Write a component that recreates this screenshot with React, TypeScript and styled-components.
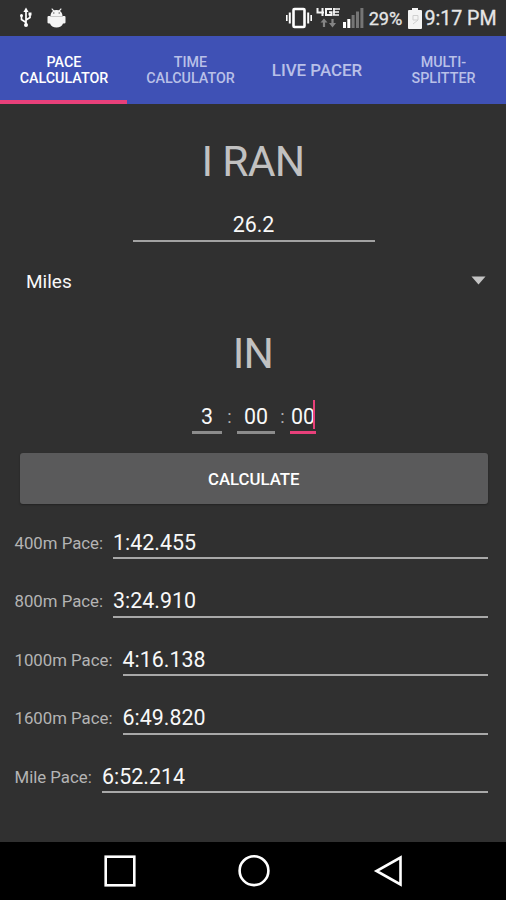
import React from "react";
import styled, { createGlobalStyle } from "styled-components";

const GlobalStyle = createGlobalStyle`
  * { box-sizing: border-box; }
  body { margin: 0; background: #303030; font-family: Roboto, "Liberation Sans", sans-serif; }
`;

const Screen = styled.div`
  width: 506px;
  height: 900px;
  display: flex;
  flex-direction: column;
  overflow: hidden;
  background: #303030;
  color: #f8f8f8;
`;

const StatusBar = styled.header`
  height: 36px;
  flex: none;
  display: flex;
  align-items: center;
  justify-content: space-between;
  padding: 0 9.5px 0 18px;
`;

const StatusGroup = styled.div`
  display: flex;
  align-items: center;
  height: 36px;
`;

const StatusText = styled.span<{ $size: number; $left: number }>`
  font-size: ${(p) => p.$size}px;
  line-height: 36px;
  margin-left: ${(p) => p.$left}px;
  padding-top: 2px;
  color: #e6e6e6;
  -webkit-text-stroke: 0.3px #e6e6e6;
  white-space: nowrap;
`;

const Tabs = styled.nav`
  height: 67.5px;
  flex: none;
  display: grid;
  grid-template-columns: 127px 126px 127px 126px;
  background: #3f51b5;
`;

const Tab = styled.div<{ $active?: boolean; $large?: boolean }>`
  display: flex;
  align-items: center;
  justify-content: center;
  text-align: center;
  white-space: pre-line;
  padding-top: ${(p) => (p.$large ? 4 : 5)}px;
  padding-left: 1px;
  border-bottom: 4px solid ${(p) => (p.$active ? "#e8407a" : "transparent")};
  color: ${(p) => (p.$active ? "#fff" : "#b9c0e8")};
  font-weight: 500;
  font-size: ${(p) => (p.$large ? 16.9 : 14.3)}px;
  line-height: 16px;
`;

const Heading = styled.h1<{ $height: number; $drop: number }>`
  margin: 0;
  height: ${(p) => p.$height}px;
  padding-top: ${(p) => p.$drop}px;
  line-height: ${(p) => p.$height - p.$drop}px;
  font-weight: 400;
  font-size: 42.6px;
  letter-spacing: -0.7px;
  text-align: center;
  color: #c1c1c1;
`;

const DistanceField = styled.div`
  width: 242px;
  height: 37px;
  margin: 0 0 0 132.5px;
  border-bottom: 2px solid #a2a2a2;
  text-align: center;
  font-size: 21.4px;
  line-height: 40px;
`;

const UnitSelect = styled.div`
  height: 80px;
  display: flex;
  align-items: center;
  justify-content: space-between;
  padding: 0 20px 2px 26px;
  font-size: 19px;

  svg {
    margin-bottom: 1px;
  }
`;

const TimeRow = styled.div`
  height: 60px;
  display: flex;
  padding-left: 192px;
`;

const TimeField = styled.div<{ $width: number; $focused?: boolean }>`
  position: relative;
  width: ${(p) => p.$width}px;
  height: 60px;
  border-bottom: 3px solid ${(p) => (p.$focused ? "#e8407a" : "#8c8c8c")};
  text-align: center;
  font-size: 21.4px;
  line-height: 86px;
`;

const Caret = styled.i`
  position: absolute;
  right: 1px;
  top: 26px;
  width: 2.5px;
  height: 29px;
  background: #e8407a;
`;

const Colon = styled.span`
  width: 15px;
  text-align: center;
  font-size: 18px;
  line-height: 86px;
  color: #b0b0b0;
`;

const CalculateButton = styled.button`
  width: 467.5px;
  height: 50.5px;
  margin: 19px 0 0 20px;
  padding: 0;
  border: 0;
  border-radius: 3px;
  background: #5a5a5b;
  box-shadow: 0 1px 2px rgba(0, 0, 0, 0.3);
  color: #fff;
  font: 500 16.8px/52px Roboto, sans-serif;
`;

const Results = styled.section`
  flex: 1;
  padding: 15px 18.5px 0 14.5px;
`;

const ResultRow = styled.div`
  height: 58.5px;
  display: flex;
  align-items: flex-start;
`;

const ResultLabel = styled.span<{ $width: number }>`
  width: ${(p) => p.$width}px;
  flex: none;
  font-size: 16.8px;
  line-height: 49px;
  color: #b4b4b4;
  white-space: nowrap;
`;

const ResultValue = styled.span`
  flex: 1;
  height: 40.5px;
  border-bottom: 2px solid #a8a8a8;
  font-size: 21.4px;
  line-height: 47.5px;
`;

const NavBar = styled.footer`
  height: 58px;
  flex: none;
  background: #000;
  display: flex;
  align-items: center;
  justify-content: space-between;
  padding: 0 102.5px 0 103.5px;
`;

const UsbIcon = () => (
  <svg width="16" height="22" viewBox="0 0 16 22" fill="none" stroke="#fff" strokeWidth="1.7">
    <path d="M8 4v14M8 15.500L3.500 12.500V9M8 13l4-2.500V7" />
    <path d="M8 0.500l2.600 4.500H5.400z" fill="#fff" stroke="none" />
    <circle cx="8" cy="18" r="2" fill="#fff" stroke="none" />
    <circle cx="3.500" cy="8.500" r="1.500" fill="#fff" stroke="none" />
    <path d="M10.500 5.500h3v3h-3z" fill="#fff" stroke="none" />
  </svg>
);

const AndroidIcon = () => (
  <svg width="19" height="21" viewBox="0 0 19 21" fill="#f4f4f4">
    <path d="M3.500 8C3.500 5 5 3.600 6 2.900L4.300.9l.8-.6 1.900 2q2.500-.8 5 0l1.900-2 .8.6L13 2.900c1 .7 2.500 2.100 2.500 5.100z" />
    <path d="M0.500 9.200Q0.500 8 1.500 8h16q1 0 1 1.200v5.300q0 1-1.500 1H16c-.8 2.500-3.300 4-6.500 4S3.800 18 3 15.500H2Q.5 15.500.5 14.500z" />
    <path d="M3 8.500h13" stroke="#bbb" strokeWidth=".8" />
    <circle cx="6.800" cy="5" r=".7" fill="#555" />
    <circle cx="12.200" cy="5" r=".7" fill="#555" />
  </svg>
);

const VibrateIcon = () => (
  <svg width="28" height="22" viewBox="0 0 28 22" fill="none" stroke="#fff">
    <rect x="8.500" y="2" width="11" height="18" rx="1" strokeWidth="2.600" />
    <path d="M4.800 5.500v11M23.200 5.500v11" strokeWidth="2" />
    <path d="M1.800 8v6M26.200 8v6" strokeWidth="1.600" />
  </svg>
);

const NetworkIcon = () => (
  <svg width="25" height="22" viewBox="0 0 25 22" fill="none" stroke="#f5f5f5" strokeWidth="2">
    <path d="M1.500 1v4.500H8M6.500 1v8M16 2h-6v6h5.500V5.200h-2.500" />
    <path d="M17 2h7M17 5h6M17 8h6M18 1v7" strokeWidth="1.700" />
    <path d="M8 20v-6M16.500 12v6" stroke="#858585" strokeWidth="2.200" />
    <path d="M4.500 15.500L8 11.500l3.500 4zM13 16l3.500 4.500L20 16z" fill="#858585" stroke="none" />
  </svg>
);

const SignalIcon = () => (
  <svg width="21" height="20" viewBox="0 0 21 20">
    <path d="M0 14h3v6H0zM4.300 11h3v9h-3z" fill="#fff" />
    <path d="M8.600 7h3v13h-3zM13 3.500h3V20h-3zM17.400 0h3v20h-3z" fill="#757575" />
  </svg>
);

const BatteryIcon = () => (
  <svg width="14" height="21" viewBox="0 0 14 21">
    <path d="M4 0h6v2h3q1 0 1 1v17q0 1-1 1H1q-1 0-1-1V3q0-1 1-1h3z" fill="#f4f4f4" />
    <path d="M5 7.500h5v4.500H5zM10 12l-5 4" fill="none" stroke="#cfcfcf" />
  </svg>
);

const StatusSpacer = styled.span<{ $width: number }>`
  width: ${(p) => p.$width}px;
`;

const results = [
  { label: "400m Pace:", value: "1:42.455", labelWidth: 98.5 },
  { label: "800m Pace:", value: "3:24.910", labelWidth: 98.5 },
  { label: "1000m Pace:", value: "4:16.138", labelWidth: 108 },
  { label: "1600m Pace:", value: "6:49.820", labelWidth: 108 },
  { label: "Mile Pace:", value: "6:52.214", labelWidth: 87.5 },
];

export default function App() {
  return (
    <Screen>
      <GlobalStyle />
      <StatusBar>
        <StatusGroup>
          <UsbIcon />
          <StatusSpacer $width={13} />
          <AndroidIcon />
        </StatusGroup>
        <StatusGroup>
          <VibrateIcon />
          <StatusSpacer $width={3} />
          <NetworkIcon />
          <StatusSpacer $width={2} />
          <SignalIcon />
          <StatusText $size={18.2} $left={5}>29%</StatusText>
          <StatusSpacer $width={6} />
          <BatteryIcon />
          <StatusText $size={19.6} $left={2}>9:17 PM</StatusText>
        </StatusGroup>
      </StatusBar>
      <Tabs>
        <Tab $active>{"PACE\nCALCULATOR"}</Tab>
        <Tab>{"TIME\nCALCULATOR"}</Tab>
        <Tab $large>LIVE PACER</Tab>
        <Tab>{"MULTI-\nSPLITTER"}</Tab>
      </Tabs>
      <Heading $height={101.5} $drop={14}>I RAN</Heading>
      <DistanceField>26.2</DistanceField>
      <UnitSelect>
        <span>Miles</span>
        <svg width="15" height="9" viewBox="0 0 15 9" fill="#c4c4c4">
          <path d="M0.500 0.500h14L7.500 8.500z" />
        </svg>
      </UnitSelect>
      <Heading $height={52} $drop={10}>IN</Heading>
      <TimeRow>
        <TimeField $width={30}>3</TimeField>
        <Colon>:</Colon>
        <TimeField $width={38}>00</TimeField>
        <Colon>:</Colon>
        <TimeField $width={26} $focused>
          00
          <Caret />
        </TimeField>
      </TimeRow>
      <CalculateButton>CALCULATE</CalculateButton>
      <Results>
        {results.map((r) => (
          <ResultRow key={r.label}>
            <ResultLabel $width={r.labelWidth}>{r.label}</ResultLabel>
            <ResultValue>{r.value}</ResultValue>
          </ResultRow>
        ))}
      </Results>
      <NavBar>
        <svg width="32" height="32" viewBox="0 0 32 32" fill="none" stroke="#fff" strokeWidth="2.600">
          <rect x="1.700" y="1.700" width="28.600" height="28.600" />
        </svg>
        <svg width="32" height="32" viewBox="0 0 32 32" fill="none" stroke="#fff" strokeWidth="2.600">
          <circle cx="16" cy="15.700" r="14.400" />
        </svg>
        <svg width="32" height="32" viewBox="0 0 32 32" fill="none" stroke="#fff" strokeWidth="2.600">
          <path d="M28.500 2.500v27L4.500 16z" />
        </svg>
      </NavBar>
    </Screen>
  );
}
